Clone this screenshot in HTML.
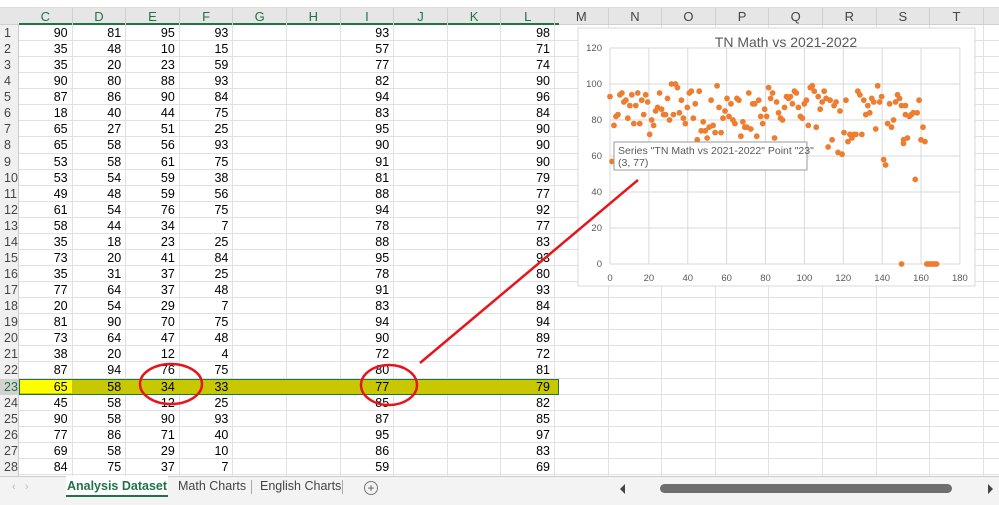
<!DOCTYPE html>
<html><head><meta charset="utf-8"><style>
body{margin:0;width:999px;height:505px;overflow:hidden;background:#fff;font-family:"Liberation Sans",Calibri,sans-serif;position:relative}
.a{position:absolute;box-sizing:border-box;white-space:nowrap}
.ch{font-size:13px;color:#444;text-align:center;line-height:17px}
.c{font-size:12.5px;color:#000;text-align:right;padding-right:5px;line-height:16px}
.rh{font-size:12.5px;color:#444;padding-left:4px;line-height:16px}
</style></head><body>
<div class="a" style="left:0;top:0;width:999px;height:8px;background:#fff;border-bottom:1px solid #ddd"></div>
<div class="a" style="left:0;top:8px;width:999px;height:17px;background:#e6e6e6;border-bottom:1px solid #d0d0d0"></div>
<div class="a" style="left:19px;top:23px;width:540px;height:2px;background:#217346"></div>
<div id="g"></div>
<svg class="a" style="left:0;top:0" width="999" height="505" id="ov"></svg>
<div class="a" style="left:0;top:476px;width:999px;height:29px;background:#f3f3f3;border-top:1px solid #ccc"></div>
<div class="a" style="left:12px;top:481px;font-size:11px;color:#bbb">&#8249;&nbsp;&nbsp;&nbsp;&#8250;</div>
<div class="a" style="left:66px;top:476px;width:102px;height:21px;background:#fff;border-bottom:2px solid #217346;font-size:12.5px;font-weight:bold;color:#217346;text-align:center;line-height:21px">Analysis Dataset</div>
<div class="a" style="left:178px;top:479px;font-size:12.5px;color:#444">Math Charts</div>
<div class="a" style="left:251px;top:480px;width:1px;height:14px;background:#aaa"></div>
<div class="a" style="left:260px;top:479px;font-size:12.5px;color:#444">English Charts</div>
<div class="a" style="left:342px;top:480px;width:1px;height:14px;background:#aaa"></div>
<div class="a" style="left:364px;top:481px;width:14px;height:14px;border:1px solid #777;border-radius:50%;font-size:12px;line-height:12px;text-align:center;color:#555">+</div>
<div class="a" style="left:620px;top:484px;width:0;height:0;border-top:5px solid transparent;border-bottom:5px solid transparent;border-right:5px solid #444"></div>
<div class="a" style="left:660px;top:484px;width:292px;height:9px;background:#6e6e6e;border-radius:5px"></div>
<div class="a" style="left:988px;top:484px;width:0;height:0;border-top:5px solid transparent;border-bottom:5px solid transparent;border-left:5px solid #444"></div>
<script>
var d=[[90,81,95,93,93,98],[35,48,10,15,57,71],[35,20,23,59,77,74],[90,80,88,93,82,90],[87,86,90,84,94,96],[18,40,44,75,83,84],[65,27,51,25,95,90],[65,58,56,93,90,90],[53,58,61,75,91,90],[53,54,59,38,81,79],[49,48,59,56,88,77],[61,54,76,75,94,92],[58,44,34,7,78,77],[35,18,23,25,88,83],[73,20,41,84,95,93],[35,31,37,25,78,80],[77,64,37,48,91,93],[20,54,29,7,83,84],[81,90,70,75,94,94],[73,64,47,48,90,89],[38,20,12,4,72,72],[87,94,76,75,80,81],[65,58,34,33,77,79],[45,58,12,25,85,82],[90,58,90,93,87,85],[77,86,71,40,95,97],[69,58,29,10,86,83],[84,75,37,7,59,69],[80,80,80,80,80,80]];
var cols="CDEFGHIJKLMNOPQRST".split(""),h="",W=53.6,X0=19,RH=16.07,Y0=25;
var map={0:0,1:1,2:2,3:3,6:4,9:5};
cols.forEach(function(c,i){var x=X0+i*W;h+='<div class="a ch" style="left:'+x+'px;top:8px;width:'+W+'px;border-right:1px solid #d0d0d0;'+(i<10?'color:#217346':'')+'">'+c+'</div>';h+='<div class="a" style="left:'+(x+W-1)+'px;top:25px;width:1px;height:451px;background:#e1e1e1"></div>';});
for(var r=0;r<29;r++){var y=Y0+r*RH;h+='<div class="a" style="left:0;top:'+(y+RH-1)+'px;width:999px;height:1px;background:#e1e1e1"></div>';
h+='<div class="a rh" style="left:0;top:'+y+'px;width:19px;height:'+RH+'px;background:'+(r==22?'#d2d2d2;color:#217346':'#f0f0f0')+';border-right:1px solid #ccc">'+(r+1)+'</div>';
if(r==22){h+='<div class="a" style="left:19px;top:'+y+'px;width:540px;height:'+RH+'px;background:#c8c800;border:1.5px solid #217346"></div><div class="a" style="left:20px;top:'+(y+1.5)+'px;width:52px;height:'+(RH-3)+'px;background:#ffff00"></div>';}
for(var k in map){h+='<div class="a c" style="left:'+(X0+k*W)+'px;top:'+y+'px;width:'+W+'px">'+d[r][map[k]]+'</div>';}}
document.getElementById('g').innerHTML=h;
var ys=[93,57,77,82,83,94,95,90,91,81,88,94,78,88,95,78,91,83,94,90,72,80,77,85,87,95,86,83,83,92,80,100,83,100,98,84,91,81,78,87,95,96,81,89,69,96,74,79,74,70,76,91,77,73,99,87,73,81,85,92,82,89,80,78,92,91,71,79,76,76,95,75,89,89,71,91,82,78,86,82,98,92,95,70,90,84,81,80,87,93,92,93,89,96,95,87,82,81,89,91,77,98,99,96,76,93,86,90,96,92,65,91,69,88,90,62,85,61,73,91,68,72,70,72,72,96,94,72,91,83,88,84,92,90,75,99,90,93,58,55,78,89,76,80,90,94,92,88,67,83,0,69,88,70,82,83,84,47,84,91,69,76,68,0,0,0,0,0,0];
var s='<rect x="578" y="28" width="397" height="258" fill="#fff" stroke="#d9d9d9"/>';
s+='<text x="786" y="47" font-size="14" fill="#595959" text-anchor="middle" font-family="Liberation Sans">TN Math vs 2021-2022</text>';
for(var v=0;v<=120;v+=20){var yy=264-v*1.8;s+='<line x1="610" x2="960" y1="'+yy+'" y2="'+yy+'" stroke="#d9d9d9"/><text x="602" y="'+(yy+3)+'" font-size="9.5" fill="#595959" text-anchor="end" font-family="Liberation Sans">'+v+'</text>';}
for(var v=0;v<=180;v+=20){var xx=610+v*1.944;s+='<line x1="'+xx+'" x2="'+xx+'" y1="48" y2="264" stroke="#d9d9d9"/><text x="'+xx+'" y="281" font-size="9.5" fill="#595959" text-anchor="middle" font-family="Liberation Sans">'+v+'</text>';}
ys.forEach(function(v,i){var xi=i<150?i*1.02:i;s+='<circle cx="'+(610+xi*1.944)+'" cy="'+(264-v*1.8)+'" r="2.9" fill="#ed7d31"/>';});
s+='<rect x="614" y="142" width="193" height="28" fill="#fff" stroke="#999"/><text x="618" y="154" font-size="10.5" fill="#595959" font-family="Liberation Sans">Series "TN Math vs 2021-2022" Point "23"</text><text x="618" y="166" font-size="10.5" fill="#595959" font-family="Liberation Sans">(3, 77)</text>';
s+='<line x1="420" y1="363" x2="638" y2="180" stroke="#e8141c" stroke-width="2.5"/>';
s+='<ellipse cx="171" cy="384" rx="31" ry="20" fill="none" stroke="#e8141c" stroke-width="2.5"/><ellipse cx="389" cy="385" rx="28" ry="20" fill="none" stroke="#e8141c" stroke-width="2.5"/>';
document.getElementById('ov').innerHTML=s;
</script>
</body></html>
